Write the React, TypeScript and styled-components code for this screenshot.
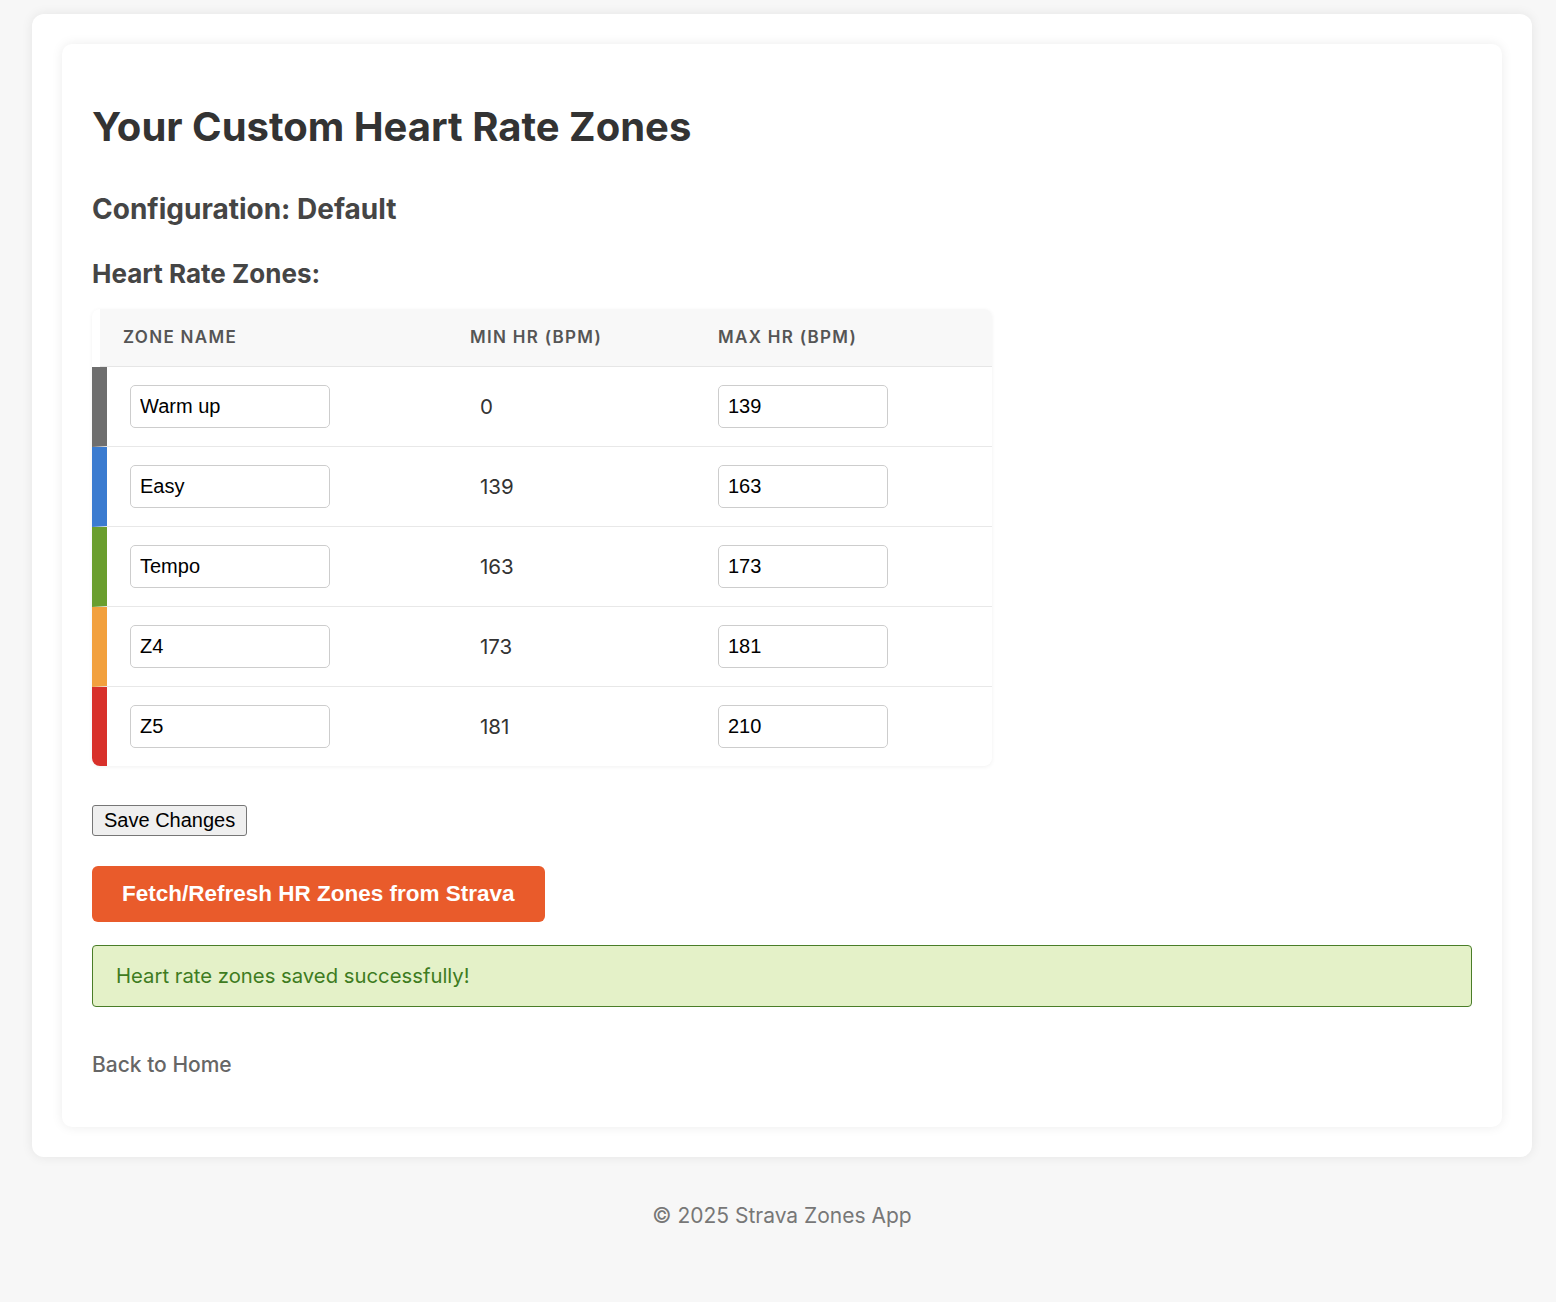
import React from "react";
import styled, { createGlobalStyle } from "styled-components";

const GlobalStyle = createGlobalStyle`
  html, body {
    margin: 0;
    padding: 0;
    background-color: #f7f7f7;
  }
  body {
    font-family: Inter, "Noto Sans", sans-serif;
    color: #333;
  }
`;

const Page = styled.div`
  min-height: 1302px;
  padding: 14px 24px 0 32px;
  box-sizing: border-box;
`;

const Container = styled.main`
  padding: 30px;
  border-radius: 12px;
  background-color: #fff;
  box-shadow: 0 0 12px rgba(0, 0, 0, 0.08);
`;

const Card = styled.section`
  padding: 30px;
  border-radius: 10px;
  background-color: #fff;
  box-shadow: 0 0 12px rgba(0, 0, 0, 0.08);
`;

const Title = styled.h1`
  margin: 28.5px 0 0;
  font-size: 40px;
  line-height: 48px;
  font-weight: 700;
  color: #333;
`;

const ConfigTitle = styled.h2`
  margin: 41px 0 0;
  font-size: 28px;
  line-height: 34px;
  font-weight: 700;
  color: #454545;
`;

const SectionTitle = styled.h3`
  margin: 32.5px 0 0;
  font-size: 26px;
  line-height: 32px;
  font-weight: 700;
  color: #454545;
`;

const Table = styled.div`
  width: 900px;
  margin-top: 18.5px;
  border-radius: 8px;
  overflow: hidden;
  background-color: #fff;
  box-shadow: 0 1px 4px rgba(0, 0, 0, 0.06);
`;

const HeaderRow = styled.div`
  display: grid;
  grid-template-columns: 355px 248px 1fr;
  align-items: center;
  height: 58px;
  margin-left: 8px;
  box-sizing: border-box;
  background-color: #f8f8f8;
  border-bottom: 1px solid #e6e6e6;
`;

const HeaderCell = styled.div<{ $pad: number }>`
  padding-left: ${(p) => p.$pad}px;
  font-size: 17px;
  font-weight: 600;
  letter-spacing: 1.3px;
  text-transform: uppercase;
  color: #555;
`;

const ZoneRow = styled.div<{ $color: string; $last?: boolean }>`
  display: grid;
  grid-template-columns: 348px 248px 1fr;
  align-items: center;
  height: ${(p) => (p.$last ? 79 : 80)}px;
  box-sizing: border-box;
  border-left: 15px solid ${(p) => p.$color};
  border-bottom: ${(p) => (p.$last ? "none" : "1px solid #e8e8e8")};
`;

const Cell = styled.div<{ $pad: number }>`
  padding-left: ${(p) => p.$pad}px;
  font-size: 20.5px;
  color: #333;
`;

const TextInput = styled.input<{ $width: number }>`
  width: ${(p) => p.$width}px;
  height: 43px;
  box-sizing: border-box;
  padding: 0 9px;
  border: 1px solid #cdcdcd;
  border-radius: 5px;
  font-family: "Liberation Sans", Arial, sans-serif;
  font-size: 20px;
  color: #000;
  background: #fff;
`;

const SaveButton = styled.button`
  display: block;
  margin-top: 39px;
  height: 31px;
  padding: 0 11px;
  border: 1px solid #767676;
  border-radius: 3px;
  background-color: #efefef;
  font-family: "Liberation Sans", Arial, sans-serif;
  font-size: 20px;
  color: #000;
`;

const StravaButton = styled.button`
  display: block;
  margin-top: 30px;
  height: 56px;
  padding: 0 30px;
  border: none;
  border-radius: 6px;
  background-color: #e95b2b;
  font-family: "Liberation Sans", Arial, sans-serif;
  font-size: 22.5px;
  font-weight: 700;
  color: #fff;
`;

const Message = styled.div`
  margin-top: 23px;
  height: 62px;
  box-sizing: border-box;
  display: flex;
  align-items: center;
  padding: 0 23px;
  border: 1px solid #4a7d28;
  border-radius: 4px;
  background-color: #e4f1c8;
  font-size: 20.3px;
  color: #3e7c1f;
`;

const BackLink = styled.a`
  display: inline-block;
  margin-top: 46px;
  margin-bottom: 20px;
  font-size: 21px;
  font-weight: 500;
  line-height: 24px;
  color: #666;
  text-decoration: none;
`;

const Footer = styled.footer`
  padding: 46px 0;
  text-align: center;
  font-size: 21px;
  color: #777;
`;

const zones = [
  { name: "Warm up", min: 0, max: 139, color: "#6e6e6e" },
  { name: "Easy", min: 139, max: 163, color: "#3a7bd0" },
  { name: "Tempo", min: 163, max: 173, color: "#6a9e2e" },
  { name: "Z4", min: 173, max: 181, color: "#f2a03d" },
  { name: "Z5", min: 181, max: 210, color: "#d8302a" },
];

export default function App() {
  return (
    <Page>
      <GlobalStyle />
      <Container>
        <Card>
          <Title>Your Custom Heart Rate Zones</Title>
          <ConfigTitle>Configuration: Default</ConfigTitle>
          <SectionTitle>Heart Rate Zones:</SectionTitle>
          <Table>
            <HeaderRow>
              <HeaderCell $pad={23}>Zone Name</HeaderCell>
              <HeaderCell $pad={15}>Min HR (bpm)</HeaderCell>
              <HeaderCell $pad={15}>Max HR (bpm)</HeaderCell>
            </HeaderRow>
            {zones.map((zone, i) => (
              <ZoneRow
                key={zone.name}
                $color={zone.color}
                $last={i === zones.length - 1}
              >
                <Cell $pad={23}>
                  <TextInput $width={200} defaultValue={zone.name} />
                </Cell>
                <Cell $pad={25}>{zone.min}</Cell>
                <Cell $pad={15}>
                  <TextInput $width={170} defaultValue={String(zone.max)} />
                </Cell>
              </ZoneRow>
            ))}
          </Table>
          <SaveButton>Save Changes</SaveButton>
          <StravaButton>Fetch/Refresh HR Zones from Strava</StravaButton>
          <Message>Heart rate zones saved successfully!</Message>
          <BackLink href="#">Back to Home</BackLink>
        </Card>
      </Container>
      <Footer>© 2025 Strava Zones App</Footer>
    </Page>
  );
}
